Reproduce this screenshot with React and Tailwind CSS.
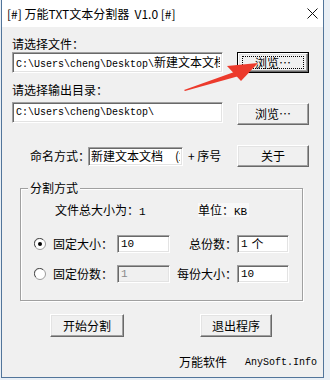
import React from 'react';

const cjk = "font-['Noto_Sans_CJK_SC',sans-serif]";
const mono = "font-['Liberation_Mono','Noto_Sans_CJK_SC',monospace]";

const sunken = "bg-white border border-t-[#a0a0a0] border-l-[#a0a0a0] border-b-white border-r-white shadow-[inset_1px_1px_0_#696969,inset_-1px_-1px_0_#e3e3e3] overflow-hidden whitespace-nowrap";
const raised = "bg-[#f0f0f0] border border-t-white border-l-white border-b-[#696969] border-r-[#696969] shadow-[inset_-1px_-1px_0_#a0a0a0,inset_1px_1px_0_#e3e3e3] flex items-center justify-center text-[12px] text-black";

function Radio({ checked }) {
    return (
        <svg width="12" height="12" viewBox="0 0 12 12" className="shrink-0">
            <circle cx="6" cy="6" r="5.5" fill="#fff" stroke="#9a9a9a" />
            <path d="M1.8 9 A5 5 0 0 1 9 1.8" fill="none" stroke="#555" strokeWidth="1" />
            {checked && <circle cx="6" cy="6" r="2" fill="#000" />}
        </svg>
    );
}

function App() {
    return (
        <div className={`w-[330px] h-[380px] bg-[#e9eff5] pl-[1px] ${cjk}`}>
            <div className="relative w-[323px] h-[378px] border-x border-b border-[#52759a] bg-[#f0f0f0] flex flex-col">
                {/* title bar */}
                <div className="h-[27px] bg-white flex items-center justify-between pl-[5px] pr-[5px] shrink-0">
                    <span className="text-[12px] text-black whitespace-pre leading-none">[#] 万能TXT文本分割器  V1.0 [#]</span>
                    <svg width="11" height="11" viewBox="0 0 11 11">
                        <path d="M0.5 0.5 L10.5 10.5 M10.5 0.5 L0.5 10.5" stroke="#111" strokeWidth="1" />
                    </svg>
                </div>

                <div className="mt-[10px] ml-[10px] h-[14px] leading-[14px] text-[12px]">请选择文件：</div>
                <div className="mt-[1px] ml-[10px] flex h-[22px]">
                    <div className={`${sunken} w-[211px] h-[21px] pl-[3px] flex items-center`}>
                        <div className={`w-[204px] overflow-hidden whitespace-nowrap text-[10px] ${mono}`}>
                            C:\Users\cheng\Desktop\<span className={`text-[12px] ${cjk}`}>新建文本文档.txt</span>
                        </div>
                    </div>
                    <div className="ml-[14px] w-[72px] h-[21px] border border-black">
                        <div className={`${raised} w-full h-full`}>
                            <div className="w-[62px] h-[13px] border border-dotted border-black flex items-center justify-center">浏览…</div>
                        </div>
                    </div>
                </div>

                <div className="mt-[9px] ml-[10px] h-[14px] leading-[14px] text-[12px]">请选择输出目录：</div>
                <div className="mt-[5px] ml-[10px] flex h-[23px]">
                    <div className={`${sunken} w-[211px] h-[21px] pl-[3px] flex items-center text-[10px] ${mono}`}>
                        C:\Users\cheng\Desktop\
                    </div>
                    <div className={`${raised} ml-[14px] mt-[1px] w-[72px] h-[22px]`}>浏览…</div>
                </div>

                <div className="mt-[20px] ml-[28px] flex items-center h-[22px] text-[12px]">
                    <span className="w-[58px] whitespace-nowrap">命名方式：</span>
                    <div className={`${sunken} w-[95px] h-[19px] pl-[2px] flex items-center`}>
                        <div className="w-[90px] overflow-hidden whitespace-nowrap">新建文本文档<span className="ml-[12px] inline-block w-[5px] overflow-hidden align-top">(2).txt</span></div>
                    </div>
                    <span className="ml-[5px] w-[49px] whitespace-nowrap">+ 序号</span>
                    <div className={`${raised} w-[72px] h-[22px]`}>关于</div>
                </div>

                {/* group box */}
                <div className="mt-[21px] ml-[18px] w-[283px] h-[113px] border border-[#a0a0a0] shadow-[inset_1px_1px_0_#fff,1px_1px_0_#fff] flex flex-col text-[12px]">
                    <div className="-mt-[8px] ml-[7px] px-[2px] w-fit h-[14px] leading-[14px] bg-[#f0f0f0]">分割方式</div>
                    <div className="mt-[8px] ml-[34px] flex h-[14px] leading-[14px]">
                        <span className="w-[143px]">文件总大小为：<span className={`${mono} text-[11px]`}>1</span></span>
                        <span className="bg-[#f8f8f8] pr-[2px]">单位：<span className={`${mono} text-[11px]`}>KB</span></span>
                    </div>
                    <div className="mt-[18px] ml-[13px] flex items-center h-[18px]">
                        <Radio checked />
                        <span className="ml-[7px] w-[64px] whitespace-nowrap">固定大小：</span>
                        <div className={`${sunken} w-[53px] h-[18px] pl-[3px] flex items-center text-[11px] ${mono}`}>10</div>
                        <span className="w-[67px] text-right whitespace-nowrap">总份数：</span>
                        <div className={`${sunken} w-[52px] h-[18px] pl-[3px] flex items-center text-[11px] ${mono}`}>1 <span className={`${cjk} text-[12px] ml-[4px]`}>个</span></div>
                    </div>
                    <div className="mt-[12px] ml-[13px] flex items-center h-[18px]">
                        <Radio />
                        <span className="ml-[7px] w-[64px] whitespace-nowrap">固定份数：</span>
                        <div className={`${sunken} !bg-[#f0f0f0] w-[53px] h-[18px] pl-[3px] flex items-center text-[11px] text-[#8a8a8a] ${mono}`}>1</div>
                        <span className="w-[67px] text-right whitespace-nowrap">每份大小：</span>
                        <div className={`${sunken} w-[52px] h-[18px] pl-[3px] flex items-center text-[11px] ${mono}`}>10</div>
                    </div>
                </div>

                <div className="mt-[13px] flex h-[23px]">
                    <div className={`${raised} ml-[48px] w-[74px] h-[23px]`}>开始分割</div>
                    <div className={`${raised} ml-[76px] w-[72px] h-[23px]`}>退出程序</div>
                </div>

                <div className="mt-[18px] ml-[177px] flex items-center h-[14px] text-[12px]">
                    <span>万能软件</span>
                    <span className={`ml-[18px] text-[10px] ${mono}`}>AnySoft.Info</span>
                </div>

                {/* red annotation arrow */}
                <svg className="absolute left-0 top-0 pointer-events-none" width="323" height="378" viewBox="0 0 323 378">
                    <polygon points="182,90 235,71 237,76 183,91" fill="#ec3a2c" />
                    <polygon points="225,66 256,63 239,81" fill="#ec3a2c" />
                </svg>
            </div>
        </div>
    );
}

export default App;
